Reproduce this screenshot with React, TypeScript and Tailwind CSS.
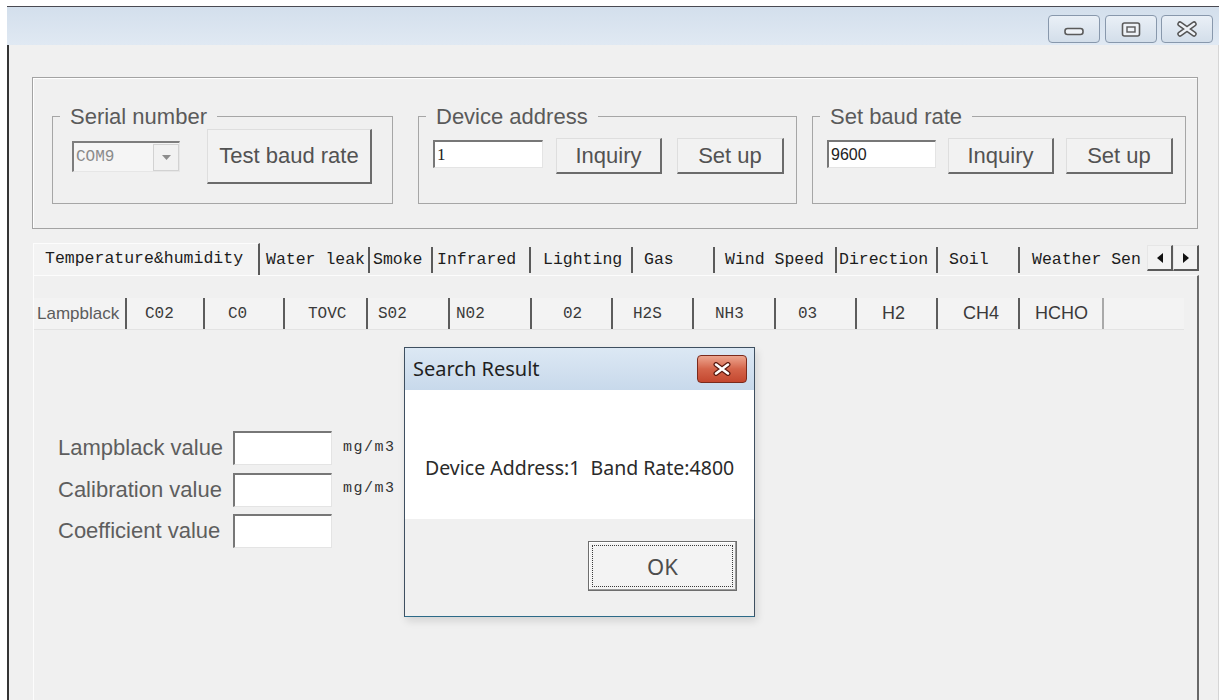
import React from "react";

// classic raised push button
const raised =
  "flex items-center justify-center bg-[#f2f2f2] border-t border-l border-t-[#dedede] border-l-[#dedede] border-b-2 border-r-2 border-b-[#6b6b6b] border-r-[#6b6b6b] text-[22px] leading-none text-[#525252]";

// sunken edit box
const sunken =
  "border-t-2 border-l-2 border-t-[#777777] border-l-[#777777] border-b border-r border-b-[#e4e4e4] border-r-[#e4e4e4] bg-white";

const PushButton: React.FC<{ label: string; className?: string }> = ({ label, className = "" }) => (
  <button type="button" className={`${raised} ${className}`}>
    {label}
  </button>
);

const EditBox: React.FC<{ value: string; className?: string; textClass?: string }> = ({
  value,
  className = "",
  textClass = "",
}) => (
  <div className={`${sunken} flex items-center pl-[2px] ${className}`}>
    <span className={textClass}>{value}</span>
  </div>
);

const GroupBox: React.FC<{ title: string; className: string; children: React.ReactNode }> = ({
  title,
  className,
  children,
}) => (
  <fieldset className={`h-[100px] border border-[#a6a6a6] ${className}`}>
    <legend className="ml-[7px] px-[10px] text-[22px] leading-[25px] text-[#5a5a5a]">{title}</legend>
    <div className="flex items-start">{children}</div>
  </fieldset>
);

const CaptionButton: React.FC<{ className?: string; children: React.ReactNode }> = ({
  className = "",
  children,
}) => (
  <div
    className={`flex h-[28px] w-[52px] items-center justify-center rounded-[4px] border border-[#8898ac] bg-gradient-to-b from-[#eaf0f7] to-[#d3deea] ${className}`}
  >
    {children}
  </div>
);

const TitleBar = () => (
  <div className="flex h-[38px] shrink-0 items-start justify-end bg-gradient-to-b from-[#d3dfec] to-[#e0e9f3] pr-[6px] pt-[8px]">
    <CaptionButton>
      <svg width="22" height="10" viewBox="0 0 22 10" className="mt-[5px]">
        <rect x="2" y="1.5" width="18" height="6" rx="2.5" fill="#eef2f7" stroke="#5a5a5a" strokeWidth="1.6" />
      </svg>
    </CaptionButton>
    <CaptionButton className="ml-[5px] w-[51px]">
      <svg width="20" height="15" viewBox="0 0 20 15">
        <rect x="1.5" y="1" width="17" height="13" rx="2" fill="#eef2f7" stroke="#5a5a5a" strokeWidth="1.6" />
        <rect x="6" y="5" width="8" height="5" fill="none" stroke="#5a5a5a" strokeWidth="1.4" />
      </svg>
    </CaptionButton>
    <CaptionButton className="ml-[4px]">
      <svg width="22" height="16" viewBox="0 0 22 16">
        <path d="M4 3 L18 13 M18 3 L4 13" stroke="#555555" strokeWidth="5.5" strokeLinecap="round" />
        <path d="M4 3 L18 13 M18 3 L4 13" stroke="#eef2f7" strokeWidth="2.6" strokeLinecap="round" />
      </svg>
    </CaptionButton>
  </div>
);

const topTabs = [
  { label: "Water leak", cls: "w-[110px] pl-[6px]" },
  { label: "Smoke", cls: "w-[63px] pl-[3px]" },
  { label: "Infrared", cls: "w-[98px] pl-[4px]" },
  { label: "Lighting", cls: "w-[102px] pl-[12px]" },
  { label: "Gas", cls: "w-[82px] pl-[11px]" },
  { label: "Wind Speed", cls: "w-[122px] pl-[10px]" },
  { label: "Direction", cls: "w-[101px] pl-[2px]" },
  { label: "Soil", cls: "w-[82px] pl-[11px]" },
];

const gasTabs = [
  { label: "Lampblack", cls: "w-[93px] pl-[3px] font-['Liberation_Sans'] text-[17px] text-[#5c5c5c]" },
  { label: "C02", cls: "w-[78px] pl-[18px]" },
  { label: "C0", cls: "w-[80px] pl-[23px]" },
  { label: "TOVC", cls: "w-[83px] pl-[23px]" },
  { label: "S02", cls: "w-[82px] pl-[10px]" },
  { label: "N02", cls: "w-[82px] pl-[6px]" },
  { label: "02", cls: "w-[81px] pl-[31px]" },
  { label: "H2S", cls: "w-[81px] pl-[20px]" },
  { label: "NH3", cls: "w-[82px] pl-[21px]" },
  { label: "03", cls: "w-[81px] pl-[22px]" },
  { label: "H2", cls: "w-[81px] pl-[25px] font-['Liberation_Sans'] text-[18px]" },
  { label: "CH4", cls: "w-[82px] pl-[25px] font-['Liberation_Sans'] text-[18px]" },
  {
    label: "HCHO",
    cls: "w-[84px] pl-[15px] font-['Liberation_Sans'] text-[18px] border-r-[#a9a9a9]",
  },
];

const readings = [
  { label: "Lampblack value", unit: "mg/m3" },
  { label: "Calibration value", unit: "mg/m3" },
  { label: "Coefficient value", unit: "" },
];

const ScrollArrows = () => (
  <div className="mb-[4px] flex h-[26px] w-[52px]">
    <div className="flex w-[26px] items-center justify-center border-t border-l border-t-[#e6e6e6] border-l-[#e6e6e6] border-b-2 border-r-2 border-b-[#5a5a5a] border-r-[#5a5a5a] bg-[#f2f2f2]">
      <svg width="6" height="10" viewBox="0 0 6 10">
        <path d="M6 0 L0 5 L6 10 Z" fill="#111" />
      </svg>
    </div>
    <div className="flex w-[26px] items-center justify-center border-t border-l border-t-[#e6e6e6] border-l-[#e6e6e6] border-b-2 border-r-2 border-b-[#5a5a5a] border-r-[#5a5a5a] bg-[#f2f2f2]">
      <svg width="6" height="10" viewBox="0 0 6 10">
        <path d="M0 0 L6 5 L0 10 Z" fill="#111" />
      </svg>
    </div>
  </div>
);

const SearchResultDialog = () => (
  <div className="absolute left-[404px] top-[347px] flex h-[270px] w-[351px] flex-col border border-[#3e4f60] border-b-[#2c6a88] shadow-[2px_4px_8px_rgba(0,0,0,0.12)]">
    <div className="flex h-[42px] shrink-0 items-start justify-between bg-gradient-to-b from-[#dce8f4] to-[#c8d9eb] pl-[8px] pr-[7px] pt-[7px]">
      <span className="font-['Noto_Sans'] text-[20px] leading-[28px] text-[#1f1f1f]">Search Result</span>
      <div className="flex h-[28px] w-[50px] items-center justify-center rounded-[4px] border border-[#7b2a1c] bg-gradient-to-b from-[#eca58f] via-[#d4644a] to-[#c4472f]">
        <svg width="20" height="14" viewBox="0 0 20 14">
          <path d="M4 2.5 L16 11.5 M16 2.5 L4 11.5" stroke="#5b1a10" strokeWidth="5" strokeLinecap="round" />
          <path d="M4 2.5 L16 11.5 M16 2.5 L4 11.5" stroke="#ffffff" strokeWidth="2.6" strokeLinecap="round" />
        </svg>
      </div>
    </div>
    <div className="h-[129px] shrink-0 bg-white pl-[20px] pt-[65px]">
      <span className="whitespace-pre font-['Noto_Sans'] text-[19.5px] leading-[26px] text-[#2a2a2a]">
        Device Address:1  Band Rate:4800
      </span>
    </div>
    <div className="flex flex-1 items-start justify-end bg-[#f0f0f0] pr-[17px] pt-[22px]">
      <button
        type="button"
        className="flex h-[50px] w-[149px] border border-[#6e6e6e] bg-[#f3f3f3] p-[3px] shadow-[inset_-1px_-1px_0_#9a9a9a,inset_1px_1px_0_#ffffff]"
      >
        <span className="flex flex-1 items-center justify-center border border-dotted border-[#3a3a3a] font-['Noto_Sans'] text-[22px] text-[#4d4d4d]">
          OK
        </span>
      </button>
    </div>
  </div>
);

export default function App() {
  return (
    <div className="relative h-[700px] w-[1220px] overflow-hidden bg-white font-['Liberation_Sans',sans-serif]">
      <div className="ml-[7px] mt-[6px] flex h-[694px] w-[1212px] flex-col border-t border-[#4a4a52]">
        <TitleBar />

        <div className="flex flex-1 flex-col border-l-2 border-r border-l-[#353535] border-r-[#d6d6d6] bg-[#f0f0f0]">
          {/* port / address / baud settings */}
          <div className="ml-[23px] mt-[32px] flex h-[152px] w-[1166px] shrink-0 items-start border border-[#a3a3a3] pl-[19px] pt-[26px] shadow-[inset_1px_1px_0_#ffffff]">
            <GroupBox title="Serial number" className="w-[341px]">
              <div className="ml-[19px] mt-[12px] flex h-[31px] w-[108px] items-center border-t-2 border-l-2 border-t-[#7d7d7d] border-l-[#7d7d7d] border-b border-r border-b-[#e6e6e6] border-r-[#e6e6e6] bg-[#f5f5f5]">
                <span className="flex-1 pl-[2px] font-['Liberation_Mono'] text-[16px] text-[#8a8a8a]">COM9</span>
                <span className="flex h-[27px] w-[26px] items-center justify-center border border-[#d2d2d2] bg-[#f1f1f1]">
                  <svg width="9" height="5" viewBox="0 0 9 5">
                    <path d="M0 0 L9 0 L4.5 5 Z" fill="#8c8c8c" />
                  </svg>
                </span>
              </div>
              <PushButton label="Test baud rate" className="ml-[27px] h-[55px] w-[165px]" />
            </GroupBox>

            <GroupBox title="Device address" className="ml-[25px] w-[379px]">
              <EditBox
                value="1"
                className="ml-[14px] mt-[11px] h-[28px] w-[110px]"
                textClass="font-['Liberation_Serif'] text-[17px] text-[#222]"
              />
              <PushButton label="Inquiry" className="ml-[13px] mt-[9px] h-[36px] w-[106px]" />
              <PushButton label="Set up" className="ml-[15px] mt-[9px] h-[36px] w-[107px]" />
            </GroupBox>

            <GroupBox title="Set baud rate" className="ml-[15px] w-[374px]">
              <EditBox
                value="9600"
                className="ml-[14px] mt-[11px] h-[28px] w-[109px]"
                textClass="text-[16px] text-[#222]"
              />
              <PushButton label="Inquiry" className="ml-[12px] mt-[9px] h-[36px] w-[106px]" />
              <PushButton label="Set up" className="ml-[12px] mt-[9px] h-[36px] w-[107px]" />
            </GroupBox>
          </div>

          {/* sensor tabs */}
          <div className="ml-[24px] mt-[14px] flex w-[1166px] flex-1 flex-col">
            <div className="flex h-[32px] shrink-0 items-end font-['Liberation_Mono'] text-[16.5px] text-[#1c1c1c]">
              <div className="flex h-[32px] w-[227px] items-center border-l border-t border-l-[#fcfcfc] border-t-[#fcfcfc] border-r-2 border-r-[#5a5a5a] bg-[#f3f3f3] pl-[11px]">
                Temperature&amp;humidity
              </div>
              {topTabs.map((t) => (
                <div
                  key={t.label}
                  className={`mb-[2px] flex h-[26px] items-center whitespace-nowrap border-r-2 border-r-[#5a5a5a] ${t.cls}`}
                >
                  {t.label}
                </div>
              ))}
              <div className="mb-[2px] flex h-[26px] w-[127px] items-center whitespace-nowrap pl-[12px]">
                Weather Sen
              </div>
              <ScrollArrows />
            </div>

            <div className="flex-1 border-l border-t border-l-[#fcfcfc] border-t-[#fcfcfc] border-r-2 border-r-[#686868]">
              <div className="mt-[22px] flex h-[32px] w-[1150px] border-b border-b-[#e3e3e3] bg-[#f3f3f3] font-['Liberation_Mono'] text-[16px] text-[#3a3a3a]">
                {gasTabs.map((t) => (
                  <div
                    key={t.label}
                    className={`flex h-full items-center whitespace-nowrap border-r-2 border-r-[#5c5c5c] ${t.cls}`}
                  >
                    {t.label}
                  </div>
                ))}
              </div>

              <div className="mt-[101px] grid grid-cols-[175px_99px_auto] items-center gap-y-[7.5px] pl-[24px]">
                {readings.map((r) => (
                  <React.Fragment key={r.label}>
                    <span className="text-[22px] leading-none text-[#5e5e5e]">{r.label}</span>
                    <div className={`${sunken} h-[34px]`} />
                    <span className="ml-[11px] font-['Liberation_Mono'] text-[15px] tracking-[1.5px] text-[#333]">
                      {r.unit}
                    </span>
                  </React.Fragment>
                ))}
              </div>
            </div>
          </div>
        </div>
      </div>

      <SearchResultDialog />
    </div>
  );
}
